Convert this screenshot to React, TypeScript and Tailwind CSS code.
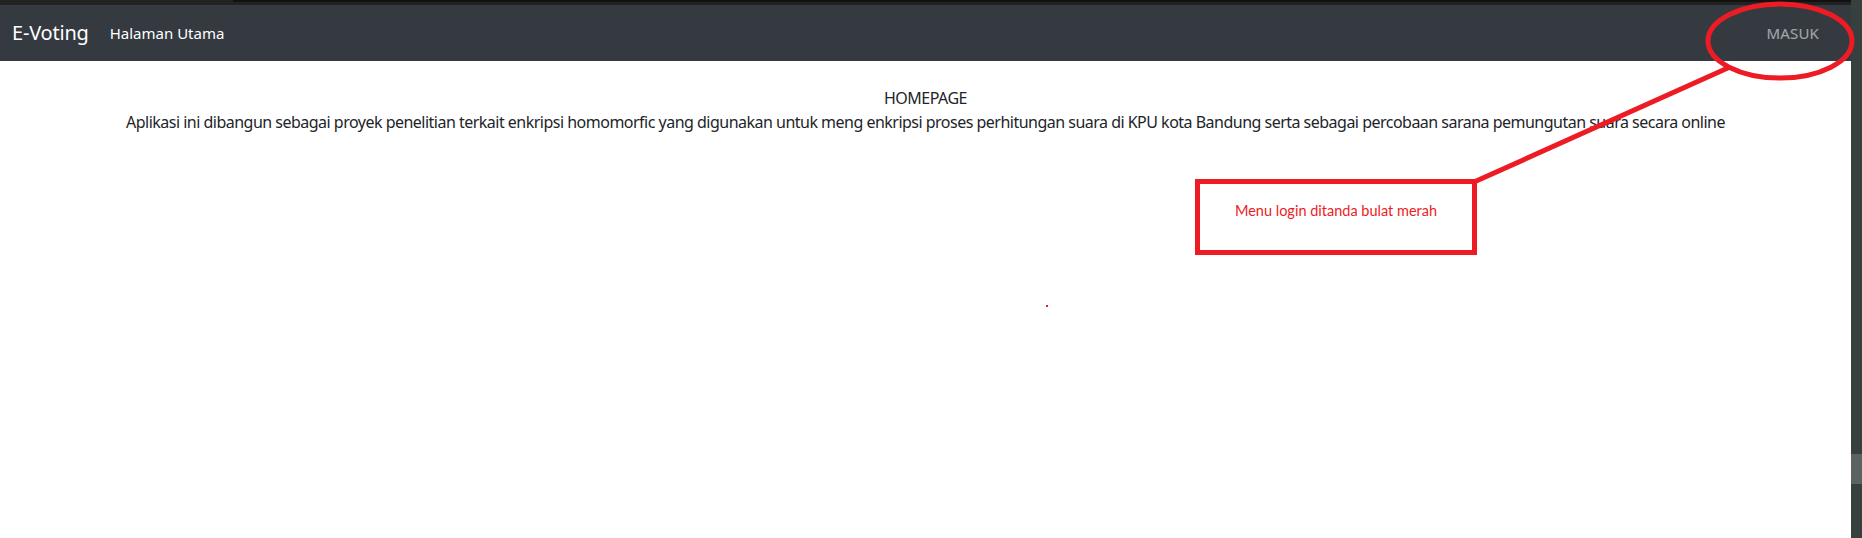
import React from 'react';

const bodyFont = { fontFamily: '"Noto Sans", "Open Sans", sans-serif' };

const Navbar: React.FC = () => (
  <nav className="h-[56px] bg-[#343a40] flex items-center pl-[12px] pr-[32px]">
    <span className="text-[20px] text-white leading-none mr-[21px] tracking-[-0.01em]">E-Voting</span>
    <a className="text-[15px] text-white">Halaman Utama</a>
    <a className="ml-auto text-[15px] text-white/55 tracking-[0.01em]">MASUK</a>
  </nav>
);

const Annotations: React.FC = () => (
  <>
    <svg className="absolute inset-0 pointer-events-none" width="1862" height="538">
      <ellipse cx="1780" cy="41" rx="72" ry="37" fill="none" stroke="#ed1c24" strokeWidth="5" />
      <line x1="1730" y1="67" x2="1474" y2="182" stroke="#ed1c24" strokeWidth="5" />
      <rect x="1197.5" y="181.5" width="277" height="71" fill="none" stroke="#ed1c24" strokeWidth="5" />
      <rect x="1046" y="305" width="2" height="2" fill="#ed1c24" />
    </svg>
    <div
      className="absolute left-[1195px] top-[200px] w-[282px] text-center text-[14.5px] text-[#ed1c24]"
      style={{ fontFamily: 'Lato, "Liberation Sans", sans-serif' }}
    >
      Menu login ditanda bulat merah
    </div>
  </>
);

export default function App() {
  return (
    <div className="relative flex w-full h-[538px] bg-white overflow-hidden" style={bodyFont}>
      <div className="flex-1 flex flex-col">
        <div className="h-[5px] bg-[#222222] flex">
          <div className="w-[233px]" />
          <div className="flex-1 h-[2px] bg-[#111111]" />
        </div>
        <Navbar />
        <main className="pt-[25px] text-center text-[16px] leading-[24px] text-[#212529] tracking-[-0.032em]">
          <p>HOMEPAGE</p>
          <p>
            Aplikasi ini dibangun sebagai proyek penelitian terkait enkripsi homomorfic yang digunakan untuk meng enkripsi proses perhitungan suara di KPU kota Bandung serta sebagai percobaan sarana pemungutan suara secara online
          </p>
        </main>
      </div>
      <div className="w-[11px] bg-[#36403d] flex flex-col">
        <div className="h-[454px]" />
        <div className="h-[30px] bg-[#5b6360]" />
      </div>
      <Annotations />
    </div>
  );
}
